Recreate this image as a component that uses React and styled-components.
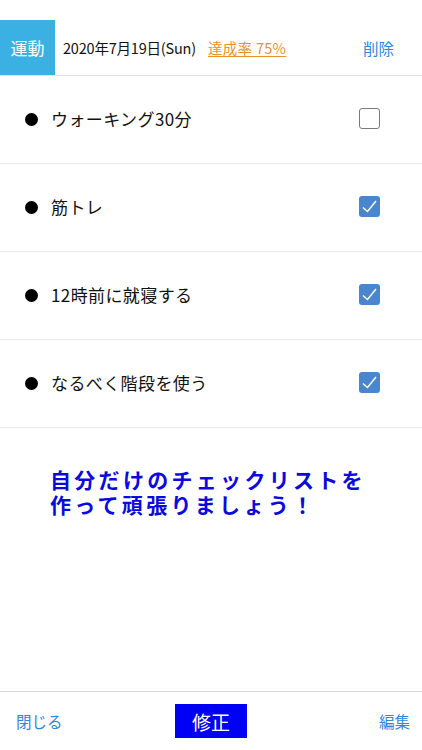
import styled, { createGlobalStyle } from 'styled-components';

const GlobalStyle = createGlobalStyle`
  html, body {
    margin: 0;
    padding: 0;
    background: #FFFFFF;
  }
  body {
    font-family: 'Noto Sans CJK JP', 'Noto Sans', sans-serif;
  }
`

const items = [
    { name: 'ウォーキング30分', done: false },
    { name: '筋トレ', done: true },
    { name: '12時前に就寝する', done: true },
    { name: 'なるべく階段を使う', done: true },
]

export default function App() {
    return (
        <Screen>
            <GlobalStyle />
            <Header>
                <Category>運動</Category>
                <DateText>2020年7月19日(Sun)</DateText>
                <Rate>達成率 75%</Rate>
                <LinkButton push>削除</LinkButton>
            </Header>
            <List>
                {items.map(item => (
                    <Row key={item.name}>
                        <Bullet />
                        <Name>{item.name}</Name>
                        <Check checked={item.done}>
                            {item.done && (
                                <svg width="15" height="13" viewBox="0 0 15 13">
                                    <path d="M1 7.5 L5.5 11.5 L14 1" fill="none" stroke="#FFFFFF" strokeWidth="1.4" />
                                </svg>
                            )}
                        </Check>
                    </Row>
                ))}
            </List>
            <Message>自分だけのチェックリストを<br />作って頑張りましょう！</Message>
            <Footer>
                <LinkButton indent>閉じる</LinkButton>
                <EditButton>修正</EditButton>
                <LinkButton align="end">編集</LinkButton>
            </Footer>
        </Screen>
    )
}

const Screen = styled.div`
width: 422px;
height: 750px;
padding-top: 20px;
box-sizing: border-box;
display: flex;
flex-direction: column;
`

const Header = styled.div`
height: 55px;
display: flex;
align-items: center;
border-bottom: 1px solid #E2E2E2;
padding-right: 28px;
`

const Category = styled.div`
width: 55px;
height: 100%;
background: #3BB0E3;
color: #FFFFFF;
font-size: 17px;
display: flex;
justify-content: center;
align-items: center;
`

const DateText = styled.span`
margin-left: 8px;
font-size: 14.5px;
color: #111111;
letter-spacing: -0.2px;
`

const Rate = styled.span`
margin-left: 12px;
font-size: 14.5px;
color: #F0902A;
text-decoration: underline;
text-underline-offset: 2px;
letter-spacing: 0.3px;
`

const LinkButton = styled.span`
margin-left: ${props => props.push ? 'auto' : props.indent ? '4px' : '0'};
justify-self: ${props => props.align || 'start'};
font-size: 15.5px;
color: #2F86E0;
`

const List = styled.div`
display: flex;
flex-direction: column;
`

const Row = styled.div`
height: 87px;
display: flex;
align-items: center;
padding-left: 25px;
padding-right: 42px;
border-bottom: 1px solid #E8E8E8;
`

const Bullet = styled.div`
width: 13px;
height: 13px;
border-radius: 50%;
background: #000000;
`

const Name = styled.span`
margin-left: 13px;
flex: 1;
font-size: 17px;
line-height: 20px;
margin-top: -2px;
color: #111111;
letter-spacing: 0.4px;
`

const Check = styled.div`
width: 21px;
height: 21px;
margin-top: -2px;
box-sizing: border-box;
border-radius: 3px;
border: ${props => props.checked ? 'none' : '1.5px solid #7A7A7A'};
background: ${props => props.checked ? '#4A86CF' : '#FFFFFF'};
display: flex;
justify-content: center;
align-items: center;
`

const Message = styled.div`
margin-top: 39px;
margin-left: 50px;
font-size: 21px;
line-height: 25px;
font-weight: 700;
color: #0A0AE0;
letter-spacing: 3.3px;
`

const Footer = styled.div`
margin-top: auto;
height: 58px;
border-top: 1px solid #D8D8D8;
display: grid;
grid-template-columns: 1fr auto 1fr;
align-items: center;
padding: 0 12px;
`

const EditButton = styled.div`
width: 72px;
height: 34px;
background: #0000F5;
color: #FFFFFF;
font-size: 19px;
display: flex;
justify-content: center;
align-items: center;
`
